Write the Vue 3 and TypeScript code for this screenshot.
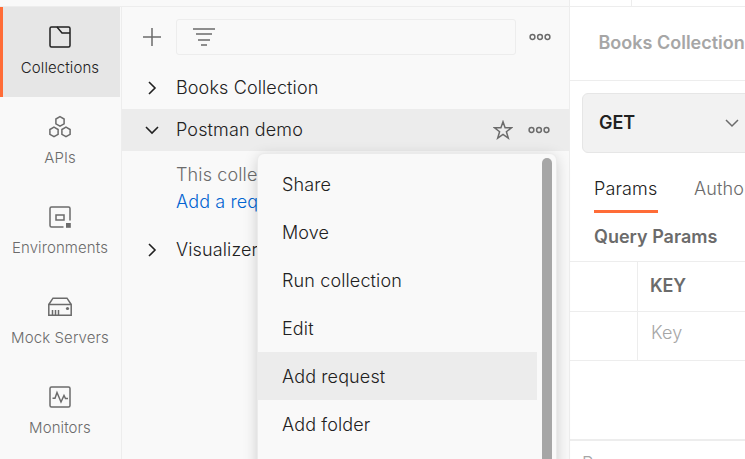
<script setup lang="ts">
interface NavItem {
  label: string
  icon: 'collections' | 'apis' | 'environments' | 'servers' | 'monitors'
  active?: boolean
}

const navItems: NavItem[] = [
  { label: 'Collections', icon: 'collections', active: true },
  { label: 'APIs', icon: 'apis' },
  { label: 'Environments', icon: 'environments' },
  { label: 'Mock Servers', icon: 'servers' },
  { label: 'Monitors', icon: 'monitors' },
]

const menuItems: string[] = ['Share', 'Move', 'Run collection', 'Edit', 'Add request', 'Add folder']
const highlighted = 'Add request'
</script>

<template>
  <div class="app">
    <div class="topbar">
      <div class="topbar-left"></div>
      <div class="topbar-tab"></div>
      <div class="topbar-rest"></div>
    </div>
    <div class="body">
      <nav class="sidebar">
        <div v-for="item in navItems" :key="item.label" class="nav-item" :class="{ active: item.active }">
          <svg class="nav-icon" viewBox="0 0 24 24" fill="none" stroke="currentColor" stroke-width="1.5">
            <template v-if="item.icon === 'collections'">
              <rect x="2" y="2" width="20" height="20" rx="1.5" />
              <path d="M9 2l5 6h8" />
            </template>
            <template v-else-if="item.icon === 'apis'">
              <path d="M12 1.7l4.1 2.3v4.8L12 11.1 7.9 8.8V4z" />
              <path d="M6 12.2l4.1 2.3v4.8L6 21.6l-4.1-2.3v-4.8z" />
              <path d="M18 12.2l4.1 2.3v4.8L18 21.6l-4.1-2.3v-4.8z" />
            </template>
            <template v-else-if="item.icon === 'environments'">
              <path d="M15.5 22H3.5A1.5 1.5 0 0 1 2 20.5V3.5A1.5 1.5 0 0 1 3.5 2H20.5A1.5 1.5 0 0 1 22 3.5V15.5" />
              <rect x="8" y="10" width="8" height="5" />
              <rect x="18" y="18" width="4.8" height="4.8" fill="currentColor" stroke="none" />
            </template>
            <template v-else-if="item.icon === 'servers'">
              <path d="M0.8 9.5H23.2V20.3H0.8zM0.8 9.5L5 3.2H19L23.2 9.5" />
              <path d="M4.5 15v5M7.5 15v5M10.5 15v5" />
              <circle cx="19.5" cy="13.5" r="1.6" fill="currentColor" stroke="none" />
            </template>
            <template v-else>
              <rect x="2" y="2" width="20" height="20" rx="1.5" />
              <path d="M4.5 13.3H7L9 7.5l4 9.5 3-6.5 1.5 3H20" />
            </template>
          </svg>
          <span class="nav-label">{{ item.label }}</span>
        </div>
      </nav>

      <section class="tree">
        <div class="tree-head">
          <svg class="plus" viewBox="0 0 18 18" stroke="currentColor" stroke-width="1.5">
            <path d="M9 0v18M0 9h18" />
          </svg>
          <div class="filter">
            <svg class="filter-icon" viewBox="0 0 22 18" stroke="currentColor" stroke-width="1.5">
              <path d="M0 1h22M3 6h16M5 12h12M8 17h6" />
            </svg>
          </div>
          <svg class="dots" viewBox="0 0 22 8" fill="none" stroke="currentColor" stroke-width="1.5">
            <circle cx="3.5" cy="4" r="2.4" />
            <circle cx="11" cy="4" r="2.4" />
            <circle cx="18.5" cy="4" r="2.4" />
          </svg>
        </div>

        <div class="row">
          <svg class="chevron" viewBox="0 0 16 16"><path d="M5 2l6 6-6 6" /></svg>
          <span class="row-name">Books Collection</span>
        </div>
        <div class="row selected">
          <svg class="chevron" viewBox="0 0 16 16"><path d="M2 5l6 6 6-6" /></svg>
          <span class="row-name">Postman demo</span>
          <svg class="star" viewBox="0 0 20 20" fill="none" stroke="currentColor" stroke-width="1.5">
            <path d="M10 1.8l2.1 6h6.3l-5 3.9 1.9 6.4L10 14.4l-5.3 3.7 1.9-6.4-5-3.9h6.3z" />
          </svg>
          <svg class="dots" viewBox="0 0 22 8" fill="none" stroke="currentColor" stroke-width="1.5">
            <circle cx="3.5" cy="4" r="2.4" />
            <circle cx="11" cy="4" r="2.4" />
            <circle cx="18.5" cy="4" r="2.4" />
          </svg>
        </div>
        <div class="empty">
          <div>This collection is empty</div>
          <a class="link">Add a request</a>
        </div>
        <div class="row">
          <svg class="chevron" viewBox="0 0 16 16"><path d="M5 2l6 6-6 6" /></svg>
          <span class="row-name">Visualizer</span>
        </div>

        <div class="menu">
          <div class="menu-list">
            <div v-for="m in menuItems" :key="m" class="menu-item" :class="{ hover: m === highlighted }">{{ m }}</div>
          </div>
          <div class="scrollbar"></div>
        </div>
      </section>

      <main class="request">
        <div class="crumb">Books Collection</div>
        <div class="url-row">
          <div class="method">
            <span class="method-name">GET</span>
            <svg class="method-chevron" viewBox="0 0 16 16"><path d="M2 5l6 6 6-6" /></svg>
          </div>
        </div>
        <div class="tabs">
          <span class="tab current">Params</span>
          <span class="tab">Authorization</span>
        </div>
        <div class="section-title">Query Params</div>
        <div class="table">
          <div class="table-row head"><div class="check"></div><div class="cell">KEY</div></div>
          <div class="table-row"><div class="check"></div><div class="cell placeholder">Key</div></div>
        </div>
        <div class="response">Response</div>
      </main>
    </div>
  </div>
</template>

<style>
body {
  margin: 0;
  overflow: hidden;
}
</style>

<style scoped>
.app {
  display: flex;
  flex-direction: column;
  width: 745px;
  height: 459px;
  overflow: hidden;
  box-sizing: border-box;
  background: #f9f9f9;
  color: #212121;
  font-family: Inter, "Liberation Sans", sans-serif;
  font-size: 18px;
  font-weight: 350;
  letter-spacing: 0.13px;
  white-space: nowrap;
}
.app * {
  box-sizing: border-box;
}
.topbar {
  display: flex;
  flex: none;
  height: 7px;
  border-bottom: 1px solid #ededed;
}
.topbar-left {
  width: 570px;
  border-right: 1px solid #ededed;
}
.topbar-tab {
  width: 62px;
  background: #fff;
  border-right: 1px solid #ededed;
}
.topbar-rest {
  flex: 1;
  background: #fff;
}
.body {
  display: flex;
  flex: 1;
  min-height: 0;
}
.sidebar {
  flex: none;
  width: 122px;
  padding-right: 1px;
  border-right: 1px solid #ededed;
}
.nav-item {
  display: flex;
  flex-direction: column;
  align-items: center;
  width: 120px;
  height: 90px;
  padding-top: 18px;
  color: #6b6b6b;
}
.nav-item.active {
  padding-right: 3px;
  border-left: 3px solid #ff6c37;
  background: #e6e6e6;
  color: #212121;
}
.nav-icon {
  width: 24px;
  height: 24px;
}
.nav-label {
  margin-top: 8px;
  font-size: 15px;
  letter-spacing: 0.1px;
  line-height: 22px;
}
.tree {
  position: relative;
  flex: none;
  width: 448px;
  border-right: 1px solid #ededed;
}
.tree-head {
  display: flex;
  align-items: center;
  height: 60px;
  padding: 0 18px 0 21px;
  color: #6b6b6b;
}
.plus {
  width: 18px;
  height: 18px;
}
.filter {
  display: flex;
  align-items: center;
  width: 340px;
  height: 36px;
  margin-left: 15px;
  padding-left: 16px;
  border: 1px solid #ededed;
  border-radius: 3px;
}
.filter-icon {
  width: 22px;
  height: 18px;
}
.dots {
  width: 22px;
  height: 8px;
  color: #6b6b6b;
}
.tree-head .dots {
  margin-left: auto;
}
.row {
  display: flex;
  align-items: center;
  height: 42px;
  padding: 0 19px 0 22px;
}
.row.selected {
  background: #ececec;
}
.chevron {
  width: 16px;
  height: 16px;
  margin-right: 16px;
  fill: none;
  stroke: #212121;
  stroke-width: 1.6;
}
.row-name {
  flex: 1;
  padding-bottom: 2px;
}
.star {
  width: 20px;
  height: 20px;
  margin-right: 15px;
  color: #6b6b6b;
}
.empty {
  height: 78px;
  padding: 10px 0 0 54px;
  color: #6b6b6b;
  line-height: 27px;
}
.link {
  color: #0265d2;
}
.menu {
  position: absolute;
  top: 147px;
  left: 136px;
  display: flex;
  width: 298px;
  height: 330px;
  border-radius: 6px;
  background: #f9f9f9;
  box-shadow: 0 0 0 1px #ebebeb, 0 3px 15px rgba(0, 0, 0, 0.2);
}
.menu-list {
  width: 279px;
  padding-top: 6px;
}
.menu-item {
  height: 48px;
  padding-left: 24px;
  line-height: 50px;
}
.menu-item.hover {
  background: #ececec;
}
.scrollbar {
  width: 10px;
  height: 340px;
  margin: 4px 0 0 5px;
  border-radius: 5px;
  background: #a6a6a6;
}
.request {
  flex: 1;
  min-width: 0;
  overflow: hidden;
  background: #fff;
}
.crumb {
  height: 74px;
  padding-left: 28.5px;
  border-bottom: 1px solid #ededed;
  color: #a6a6a6;
  font-weight: 600;
  letter-spacing: 0;
  line-height: 71px;
}
.url-row {
  padding: 12px 0 0 12px;
}
.method {
  display: flex;
  align-items: center;
  justify-content: space-between;
  width: 190px;
  height: 60px;
  padding: 0 31px 0 16px;
  border: 1px solid #e6e6e6;
  border-radius: 6px;
  background: #f2f2f2;
  font-weight: 600;
  letter-spacing: -0.1px;
}
.method-name {
  padding-bottom: 1px;
}
.method-chevron {
  width: 16px;
  height: 16px;
  fill: none;
  stroke: #6b6b6b;
  stroke-width: 1.5;
}
.tabs {
  display: flex;
  gap: 36px;
  height: 60px;
  padding: 12px 0 0 24px;
  color: #6b6b6b;
}
.tab {
  flex: none;
  height: 48px;
  line-height: 48px;
}
.tab.current {
  width: 64px;
  border-bottom: 3px solid #ff6c37;
  color: #212121;
}
.section-title {
  height: 48px;
  padding-left: 24px;
  color: #6b6b6b;
  font-weight: 600;
  letter-spacing: 0;
  line-height: 48px;
}
.table {
  border-top: 1px solid #ededed;
}
.table-row {
  display: flex;
  height: 49px;
  border-bottom: 1px solid #ededed;
}
.table-row.head {
  height: 50px;
  color: #6b6b6b;
  font-weight: 600;
  letter-spacing: -0.1px;
}
.check {
  width: 68px;
  border-right: 1px solid #ededed;
}
.cell {
  padding-left: 12px;
  line-height: 48px;
}
.placeholder {
  padding-left: 13px;
  color: #a6a6a6;
  line-height: 42px;
}
.response {
  margin-top: 78px;
  padding: 12px 0 0 12px;
  border-top: 2px solid #ededed;
  color: #a6a6a6;
  line-height: 22px;
}
</style>
